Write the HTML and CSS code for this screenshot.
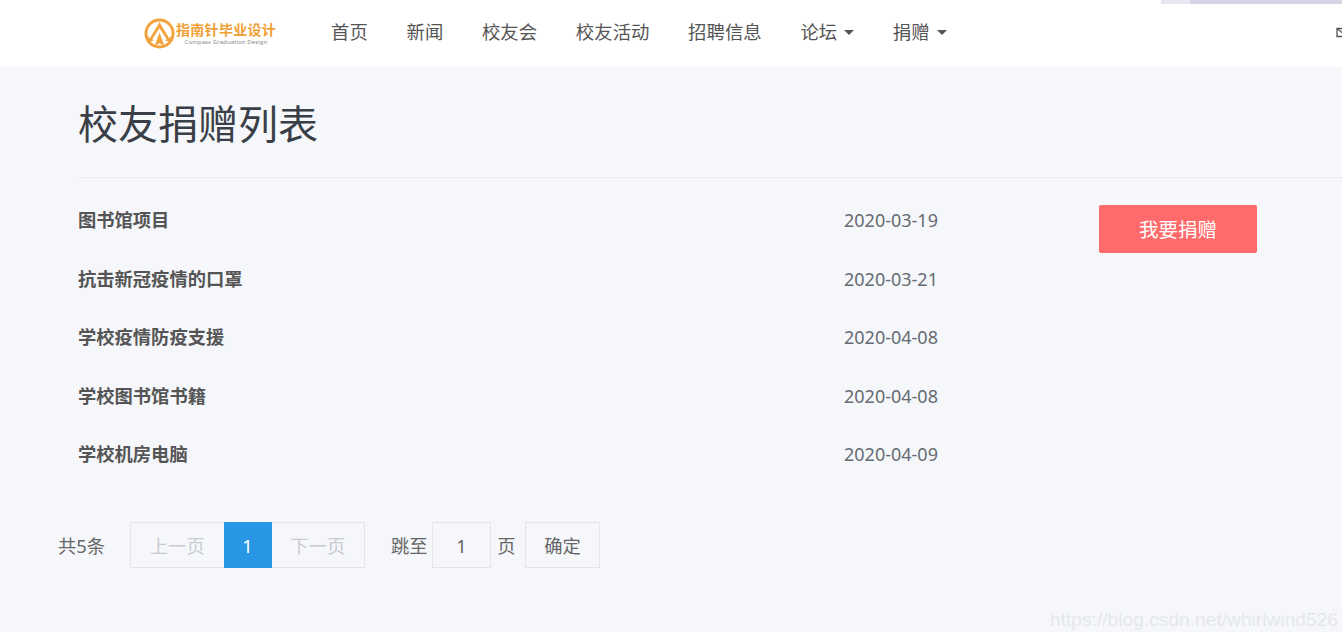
FILE: index.html
```html
<!DOCTYPE html>
<html lang="zh-CN">
<head>
<meta charset="utf-8">
<title>校友捐赠列表</title>
<link rel="stylesheet" href="styles.css">
</head>
<body>
<header class="header">
  <div class="strip"><span class="strip-light"></span><span class="strip-dark"></span></div>
  <div class="header-row">
    <a class="logo" href="#">
      <svg class="logo-icon" viewBox="0 0 32 32" width="31" height="31" aria-hidden="true">
        <circle cx="16" cy="16" r="14" fill="none" stroke="#f2a33c" stroke-width="3"/>
        <path d="M16 4 L20 11 L26 21 L27.5 18 L27.5 25 L21.5 23 L23.5 22 L16 10.5 L8.5 22 L10.5 23 L4.5 25 L4.5 18 L6 21 L12 11 Z" fill="#f2a33c"/>
        <path d="M16 15 L21 29 L16 26 L11 29 Z" fill="#f2a33c"/>
      </svg>
      <span class="logo-text">
        <span class="logo-cn">指南针毕业设计</span>
        <span class="logo-en">Compass Graduation Design</span>
      </span>
    </a>
    <nav class="nav">
      <a href="#">首页</a>
      <a href="#">新闻</a>
      <a href="#">校友会</a>
      <a href="#">校友活动</a>
      <a href="#">招聘信息</a>
      <a href="#">论坛<i class="caret"></i></a>
      <a href="#">捐赠<i class="caret"></i></a>
    </nav>
    <svg class="mail" viewBox="0 0 12 12" width="12" height="12" aria-hidden="true">
      <path d="M1 2.5h10v8H1z M1 2.5l5 4 5-4" fill="none" stroke="#555" stroke-width="1.3"/>
    </svg>
  </div>
</header>
<main class="main">
  <h1 class="title">校友捐赠列表</h1>
  <div class="list">
    <a class="name" href="#">图书馆项目</a><span class="date">2020-03-19</span>
    <a class="donate" href="#">我要捐赠</a>
    <a class="name" href="#">抗击新冠疫情的口罩</a><span class="date">2020-03-21</span>
    <a class="name" href="#">学校疫情防疫支援</a><span class="date">2020-04-08</span>
    <a class="name" href="#">学校图书馆书籍</a><span class="date">2020-04-08</span>
    <a class="name" href="#">学校机房电脑</a><span class="date">2020-04-09</span>
  </div>
  <div class="pager">
    <span class="total">共5条</span>
    <div class="pages">
      <span class="page disabled">上一页</span>
      <span class="page current">1</span>
      <span class="page disabled">下一页</span>
    </div>
    <span class="jump">跳至</span>
    <span class="input">1</span>
    <span class="unit">页</span>
    <span class="confirm">确定</span>
  </div>
</main>
<div class="watermark">https://blog.csdn.net/whirlwind526</div>
</body>
</html>
```

FILE: styles.css
```css
* { box-sizing: border-box; }
html, body { margin: 0; height: 632px; overflow: hidden; }
body {
  position: relative;
  background: #f5f7fb;
  color: #666;
  font-family: "Noto Sans", "Noto Sans CJK SC", sans-serif;
  font-size: 17px;
}
a { color: inherit; text-decoration: none; }

.header { height: 67px; background: #fff; display: flex; flex-direction: column; }
.strip { height: 4px; display: flex; justify-content: flex-end; }
.strip-light { width: 29px; background: #e8e6f2; }
.strip-dark { width: 152px; background: #d6d4e4; }
.header-row { flex: 1; display: flex; align-items: center; padding: 0 0 7px 144px; overflow: hidden; }

.logo { display: flex; align-items: center; gap: 1px; width: 187px; flex: none; margin-top: 3px; }
.logo-icon { flex: none; }
.logo-text { display: flex; flex-direction: column; align-items: center; }
.logo-cn { color: #f0a035; font-size: 14px; line-height: 16px; font-weight: 700; white-space: nowrap; width: 100px; letter-spacing: 0.3px; }
.logo-en { color: #8a8a8a; font-size: 6px; line-height: 8px; white-space: nowrap; letter-spacing: 0.1px; }

.nav { display: flex; gap: 38.7px; color: #555; font-size: 18.4px; line-height: 24px; white-space: nowrap; margin-top: -1px; }
.nav a { display: flex; align-items: center; }
.caret { width: 0; height: 0; margin-left: 7px; margin-top: 2px; border-top: 5px solid #555; border-left: 5px solid transparent; border-right: 5px solid transparent; }
.mail { margin-left: auto; margin-right: -6px; flex: none; }

.main { padding: 0 0 0 78px; }
.title { margin: 0; height: 111px; padding-top: 28px; color: #3a3f47; font-size: 40px; line-height: 58px; font-weight: 400; border-bottom: 1px solid #e9ebef; }

.list { display: grid; grid-template-columns: 766px 255px 158px; grid-auto-rows: 58.5px; margin-top: 13px; align-items: center; }
.name { grid-column: 1; color: #555; font-weight: 700; font-size: 18.3px; line-height: 26px; }
.date { grid-column: 2; color: #666b73; font-size: 18px; line-height: 26px; }
.donate { grid-column: 3; grid-row: 1 / span 2; align-self: start; margin-top: 14px; height: 48px; padding-bottom: 2px; display: flex; align-items: center; justify-content: center; background: #ff6a6a; color: #fff; font-size: 19.5px; border-radius: 2px; }

.pager { display: flex; align-items: center; height: 46px; margin: 38.5px 0 0 -20px; font-size: 18.3px; color: #666; }
.total { width: 72px; flex: none; }
.pages { display: flex; height: 46px; border: 1px solid #e3e5ea; width: 235px; flex: none; }
.page { display: flex; align-items: center; justify-content: center; flex: 1; }
.disabled { color: #c9cbd0; }
.current { flex: none; width: 48px; margin: -1px 0; background: #2a97e6; color: #fff; }
.jump { margin-left: 26px; width: 41px; flex: none; }
.input { width: 59px; height: 46px; display: flex; align-items: center; justify-content: center; border: 1px solid #e3e5ea; flex: none; }
.unit { width: 34px; padding-right: 3px; text-align: center; flex: none; }
.confirm { width: 75px; height: 46px; display: flex; align-items: center; justify-content: center; border: 1px solid #e3e5ea; flex: none; }

.watermark { position: absolute; right: 4px; top: 607px; color: #e6e7eb; font-size: 19.2px; line-height: 26px; white-space: nowrap; font-family: "Liberation Sans", sans-serif; }
```
